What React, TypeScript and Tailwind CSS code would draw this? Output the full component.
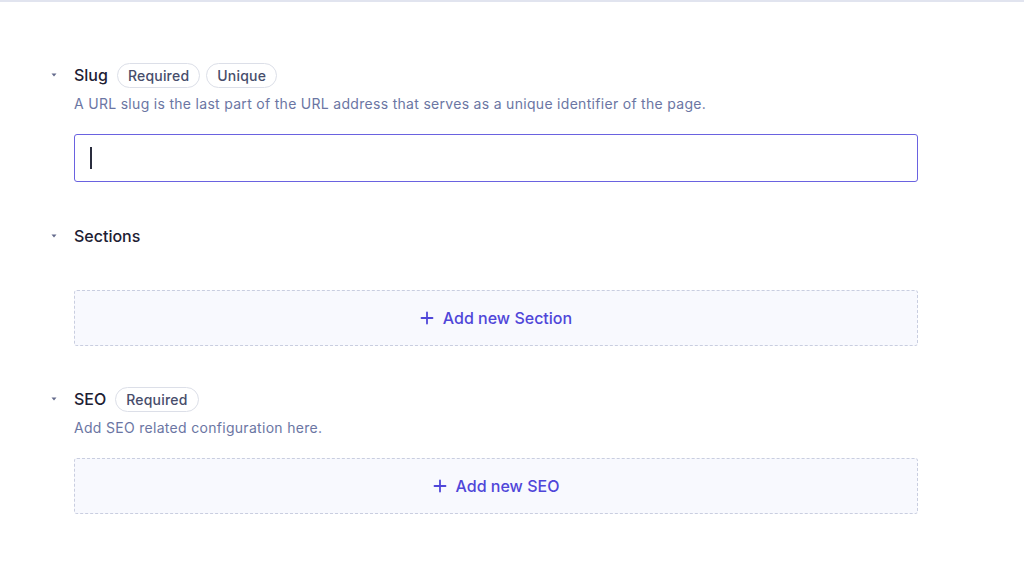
import React from "react";

const Caret = () => (
  <svg width="8" height="8" viewBox="0 0 8 8" className="shrink-0">
    <path d="M1.5 2.5 L6.5 2.5 L4 5.5 Z" fill="#646a8c" />
  </svg>
);

const Badge: React.FC<{ label: string }> = ({ label }) => (
  <span className="inline-flex h-[25px] items-center rounded-full border border-[#dcdfe8] px-[10px] text-[14px] font-medium tracking-[0.2px] text-[#474d6b]">
    {label}
  </span>
);

const FieldHeader: React.FC<{ title: string; badges?: string[] }> = ({
  title,
  badges = [],
}) => (
  <div className="relative flex h-6 items-center gap-[6px]">
    <div className="absolute -left-[24px] top-[8px]">
      <Caret />
    </div>
    <span className="mr-[3px] text-[16px] font-medium text-[#1d2033]">{title}</span>
    {badges.map((b) => (
      <Badge key={b} label={b} />
    ))}
  </div>
);

const AddBox: React.FC<{ label: string }> = ({ label }) => (
  <button className="flex h-14 w-full items-center justify-center gap-[9px] rounded-[3px] border border-dashed border-[#c9cee0] bg-[#f8f9fe] text-[16px] font-medium text-[#4f46d9]">
    <svg width="14" height="14" viewBox="0 0 14 14">
      <path d="M7 1.5v11M1.5 7h11" stroke="currentColor" strokeWidth="1.8" strokeLinecap="round" />
    </svg>
    <span>{label}</span>
  </button>
);

export default function App() {
  return (
    <div
      className="min-h-[586px] w-full bg-white"
      style={{ fontFamily: "Inter, 'Noto Sans', sans-serif" }}
    >
      <div className="h-[2px] w-full bg-[#e1e4ef]" />
      <div className="w-[918px] pl-[74px] pt-[61px]">
        {/* Slug */}
        <FieldHeader title="Slug" badges={["Required", "Unique"]} />
        <p className="mt-[7px] text-[14px] leading-5 tracking-[0.3px] text-[#6b76a3]">
          A URL slug is the last part of the URL address that serves as a unique identifier of the page.
        </p>
        <div className="mt-[20px] flex h-12 w-full items-center rounded-[3px] border border-[#6a62e0] px-[15px]">
          <span className="h-[22px] w-[1.5px] bg-[#2a2d3e]" />
        </div>

        {/* Sections */}
        <div className="mt-[42px]">
          <FieldHeader title="Sections" />
        </div>
        <div className="mt-[42px]">
          <AddBox label="Add new Section" />
        </div>

        {/* SEO */}
        <div className="mt-[41px]">
          <FieldHeader title="SEO" badges={["Required"]} />
        </div>
        <p className="mt-[7px] text-[14px] leading-5 tracking-[0.3px] text-[#6b76a3]">
          Add SEO related configuration here.
        </p>
        <div className="mt-5">
          <AddBox label="Add new SEO" />
        </div>
      </div>
    </div>
  );
}
